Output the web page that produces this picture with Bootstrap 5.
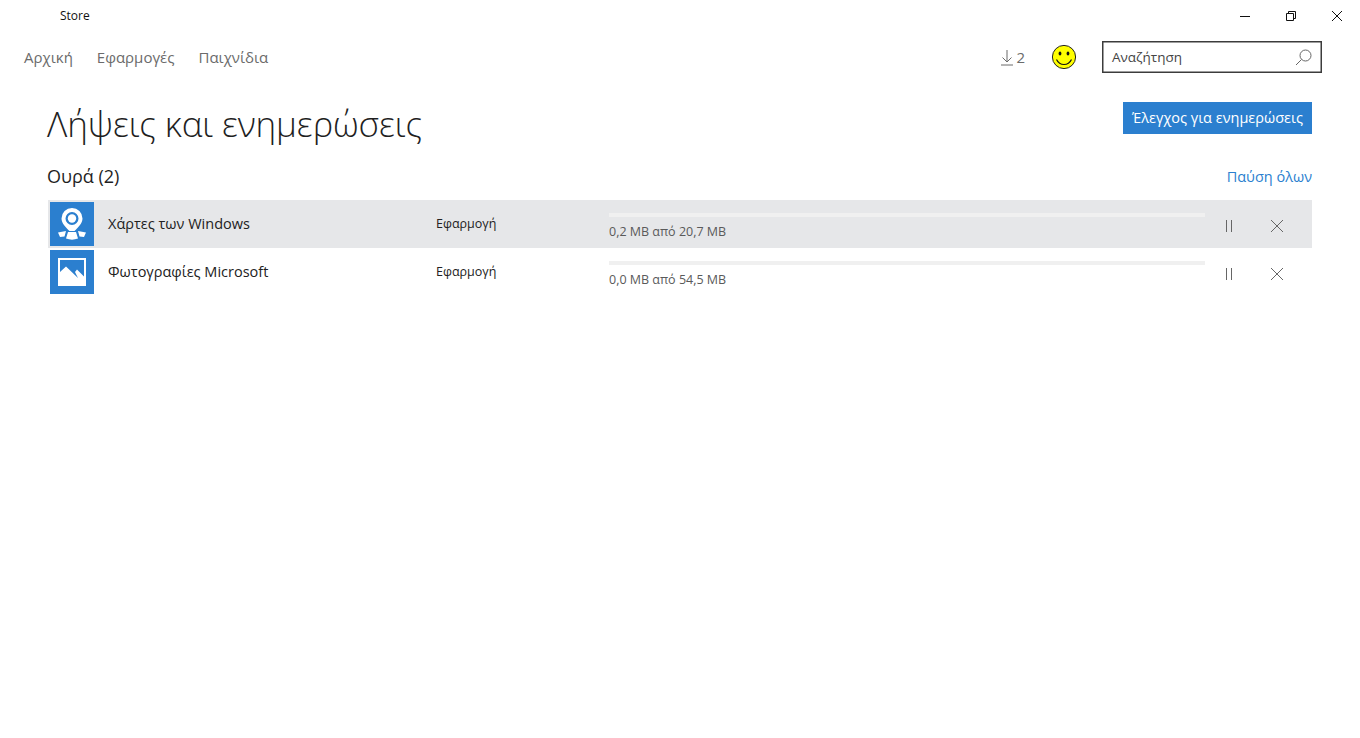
<!DOCTYPE html>
<html lang="el">
<head>
  <meta charset="UTF-8">
  <meta name="viewport" content="width=device-width, initial-scale=1">
  <title>Store</title>
  <link href="https://cdn.jsdelivr.net/npm/bootstrap@5.3.0/dist/css/bootstrap.min.css" rel="stylesheet">
  <style>
    html, body { height: 738px; overflow: hidden; }
    body { font-family: "Open Sans", "Noto Sans", sans-serif; color: #1f1f1f; background: #fff; }
    .title-bar { height: 32px; }
    .back-btn { width: 48px; height: 32px; background: #2b7fcf; border: 0; border-radius: 0; padding: 0; }
    .app-name { font-size: 12px; margin-left: 12px; color: #111; }
    .win-btn { width: 46px; height: 32px; }
    .top-nav { height: 50px; padding: 0 38px 0 24px; }
    .top-nav a { font-size: 15px; color: #6b6b6b; text-decoration: none; margin-right: 24px; }
    .dl-count { font-size: 15px; color: #6b6b6b; margin-left: 3px; }
    .dl-box { margin-right: 26px; }
    .smiley { margin-right: 25px; }
    .search-box { width: 220px; height: 32px; border: 1px solid #3c3c3c; box-shadow: inset 0 0 0 .5px #3c3c3c; padding: 0 9px; font-size: 13.5px; color: #444; }
    .page-body { padding: 0 48px 0 47px; }
    .page-head { height: 70px; padding-top: 20px; }
    .page-title { font-size: 35px; font-weight: 300; line-height: 42px; margin: 1px 0 0; letter-spacing: -.1px; }
    .check-btn { background: #2b7fcf; color: #fff; border: 0; border-radius: 0; height: 32px; width: 189px; padding: 0; font-size: 14.5px; font-weight: 400; }
    .queue-head { height: 48px; }
    .queue-title { font-size: 18px; font-weight: 400; margin: 0; line-height: 24px; }
    .pause-all { font-size: 14.5px; color: #2b7fcf; text-decoration: none; position: relative; top: 1px; }
    .dl-row { height: 48px; margin-left: 1px; padding-left: 2px; }
    .dl-row.sel { background: #e6e7e9; }
    .app-tile { width: 44px; height: 44px; background: #2b7fcf; flex: none; }
    .app-title { width: 328px; margin-left: 14px; font-size: 14.5px; color: #222; flex: none; }
    .app-kind { width: 173px; font-size: 12.5px; color: #222; flex: none; }
    .dl-state { width: 596px; flex: none; height: 48px; padding-top: 13px; }
    .dl-bar { height: 4px; background: #f0f0f0; border-radius: 0; }
    .dl-size { font-size: 12.5px; color: #5a5a5a; line-height: 17px; margin-top: 6px; }
    .row-btn { width: 48px; flex: none; }
    .row-btn:first-of-type { margin-left: 11px; }
  </style>
</head>
<body>
  <!-- title bar -->
  <div class="title-bar d-flex align-items-center">
    <button class="back-btn btn d-flex align-items-center justify-content-center" type="button" aria-label="Πίσω">
      <svg width="16" height="14" viewBox="0 0 16 14" fill="none" stroke="#fff" stroke-width="1.1"><path d="M15 7H2M7.5 1.5 2 7l5.500 5.500"/></svg>
    </button>
    <span class="app-name">Store</span>
    <div class="ms-auto d-flex">
      <div class="win-btn d-flex align-items-center justify-content-center">
        <svg width="12" height="12" viewBox="0 0 12 12" stroke="#111" fill="none"><path d="M1 6.500h10"/></svg>
      </div>
      <div class="win-btn d-flex align-items-center justify-content-center">
        <svg width="12" height="12" viewBox="0 0 12 12" stroke="#111" fill="none"><path d="M1.500 3.500h7v7h-7zM3.500 3.500v-2h7v7h-2"/></svg>
      </div>
      <div class="win-btn d-flex align-items-center justify-content-center">
        <svg width="12" height="12" viewBox="0 0 12 12" stroke="#111" fill="none"><path d="M1 1l10 10M11 1 1 11"/></svg>
      </div>
    </div>
  </div>

  <!-- nav -->
  <nav class="top-nav d-flex align-items-center">
    <a href="#">Αρχική</a>
    <a href="#">Εφαρμογές</a>
    <a href="#">Παιχνίδια</a>
    <div class="ms-auto d-flex align-items-center">
      <div class="dl-box d-flex align-items-center">
        <svg width="12" height="17" viewBox="0 0 12 17" fill="none" stroke="#6b6b6b"><path d="M6 1v12M1.500 8.500 6 13l4.500-4.500M0 16h12"/></svg>
        <span class="dl-count">2</span>
      </div>
      <svg class="smiley" width="26" height="26" viewBox="0 0 26 26">
        <circle cx="13" cy="13" r="11.600" fill="#ffff00" stroke="#222" stroke-width="1"/>
        <ellipse cx="9" cy="9.500" rx="1.400" ry="2" fill="#111"/>
        <ellipse cx="17" cy="9.500" rx="1.400" ry="2" fill="#111"/>
        <path d="M5.500 15.500c2 4 4.500 5 7.500 5s5.500-1 7.500-5" fill="none" stroke="#111" stroke-width="1.200"/>
      </svg>
      <div class="search-box d-flex align-items-center justify-content-between">
        <span>Αναζήτηση</span>
        <svg width="17" height="17" viewBox="0 0 17 17" fill="none" stroke="#666"><circle cx="10.500" cy="6.500" r="5.500"/><path d="M6.500 10.500 1 16"/></svg>
      </div>
    </div>
  </nav>

  <main class="page-body">
    <div class="page-head d-flex justify-content-between align-items-start">
      <h1 class="page-title">Λήψεις και ενημερώσεις</h1>
      <button class="check-btn btn" type="button">Έλεγχος για ενημερώσεις</button>
    </div>
    <div class="queue-head d-flex justify-content-between align-items-center">
      <h2 class="queue-title">Ουρά (2)</h2>
      <a class="pause-all" href="#">Παύση όλων</a>
    </div>

    <div class="dl-row sel d-flex align-items-center">
      <div class="app-tile d-flex align-items-center justify-content-center">
        <svg width="30" height="32" viewBox="0 0 30 32" fill="#fff">
          <path fill-rule="evenodd" d="M15 0a10.500 10.500 0 0 1 10.500 10.500c0 5-4.500 9-8 12.500h-5c-3.500-3.500-8-7.500-8-12.500A10.500 10.500 0 0 1 15 0Zm0 4a6.500 6.500 0 1 0 0 13 6.500 6.500 0 0 0 0-13Z"/>
          <circle cx="15" cy="10.500" r="4.200"/>
          <path d="M1 24.500 9 23l-1.500 5.500L3 29ZM29 24.500 21 23l1.500 5.500L27 29ZM11 24h8l2 6.500c-4 1.500-8 1.500-12 0Z"/>
        </svg>
      </div>
      <div class="app-title">Χάρτες των Windows</div>
      <div class="app-kind">Εφαρμογή</div>
      <div class="dl-state">
        <div class="dl-bar"></div>
        <div class="dl-size">0,2 MB από 20,7 MB</div>
      </div>
      <div class="row-btn text-center">
        <svg width="10" height="14" viewBox="0 0 10 14" stroke="#666" fill="none"><path d="M2.500 1v12M7.500 1v12"/></svg>
      </div>
      <div class="row-btn text-center">
        <svg width="14" height="14" viewBox="0 0 14 14" stroke="#666" fill="none"><path d="M1 1l12 12M13 1 1 13"/></svg>
      </div>
    </div>

    <div class="dl-row d-flex align-items-center">
      <div class="app-tile d-flex align-items-center justify-content-center">
        <svg width="28" height="28" viewBox="0 0 28 28" fill="#fff">
          <path fill-rule="evenodd" d="M0 0h28v28H0Zm2 2v12l6-5.500L20 20l-3-6 2-2.500 7 7V2Z"/>
        </svg>
      </div>
      <div class="app-title">Φωτογραφίες Microsoft</div>
      <div class="app-kind">Εφαρμογή</div>
      <div class="dl-state">
        <div class="dl-bar"></div>
        <div class="dl-size">0,0 MB από 54,5 MB</div>
      </div>
      <div class="row-btn text-center">
        <svg width="10" height="14" viewBox="0 0 10 14" stroke="#666" fill="none"><path d="M2.500 1v12M7.500 1v12"/></svg>
      </div>
      <div class="row-btn text-center">
        <svg width="14" height="14" viewBox="0 0 14 14" stroke="#666" fill="none"><path d="M1 1l12 12M13 1 1 13"/></svg>
      </div>
    </div>
  </main>

  <script src="https://cdn.jsdelivr.net/npm/bootstrap@5.3.0/dist/js/bootstrap.bundle.min.js"></script>
</body>
</html>
